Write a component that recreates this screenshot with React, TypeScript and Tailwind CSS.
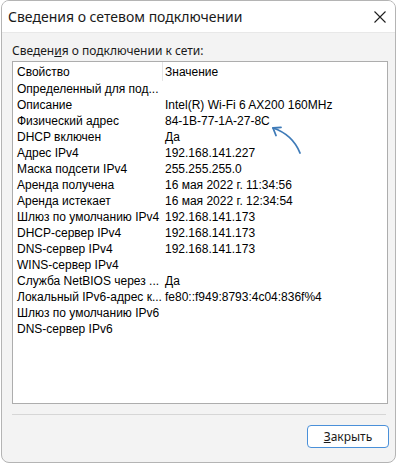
import React from 'react';

const rows: [string, string][] = [
  ['Определенный для под...', ''],
  ['Описание', 'Intel(R) Wi-Fi 6 AX200 160MHz'],
  ['Физический адрес', '84-1B-77-1A-27-8C'],
  ['DHCP включен', 'Да'],
  ['Адрес IPv4', '192.168.141.227'],
  ['Маска подсети IPv4', '255.255.255.0'],
  ['Аренда получена', '16 мая 2022 г. 11:34:56'],
  ['Аренда истекает', '16 мая 2022 г. 12:34:54'],
  ['Шлюз по умолчанию IPv4', '192.168.141.173'],
  ['DHCP-сервер IPv4', '192.168.141.173'],
  ['DNS-сервер IPv4', '192.168.141.173'],
  ['WINS-сервер IPv4', ''],
  ['Служба NetBIOS через ...', 'Да'],
  ['Локальный IPv6-адрес к...', 'fe80::f949:8793:4c04:836f%4'],
  ['Шлюз по умолчанию IPv6', ''],
  ['DNS-сервер IPv6', ''],
];

const ui = "font-['Noto_Sans',sans-serif]";
const list = "font-['Liberation_Sans',Arial,sans-serif]";

export default function App() {
  return (
    <div className="relative w-[400px] h-[465px] bg-white">
      <div className="ml-px w-[395px] h-[463px] rounded-lg border border-[#b4b4b4] bg-[#f3f3f3] overflow-hidden flex flex-col">
        {/* title bar */}
        <div className="h-8 shrink-0 bg-white border-b border-[#e8e8e8] flex items-center justify-between pl-[6px] pr-[8px]">
          <span className={`${ui} text-[14px] text-[#1a1a1a]`}>Сведения о сетевом подключении</span>
          <svg width="12" height="12" viewBox="0 0 12 12" className="mr-[1px]">
            <path d="M0.5 0.5 L11.5 11.5 M11.5 0.5 L0.5 11.5" stroke="#1f1f1f" strokeWidth="1.1" />
          </svg>
        </div>

        <div className="flex flex-col pl-[10px]">
          <div className={`${ui} mt-[10px] h-4 text-[12px] leading-4 text-[#1a1a1a]`}>
            Сведен<span className="underline">и</span>я о подключении к сети:
          </div>

          <div className={`${list} mt-[2px] w-[376px] h-[343px] border border-[#adadad] bg-white text-[12px] text-black`}>
            <div className="flex h-[19px] items-center">
              <div className="w-[150px] h-full pl-[4px] flex items-center border-r border-[#e5e5e5]">Свойство</div>
              <div className="pl-[2px]">Значение</div>
            </div>
            {rows.map(([k, v]) => (
              <div key={k} className="flex h-4 leading-4">
                <div className="w-[150px] pl-[4px] whitespace-nowrap">{k}</div>
                <div className="pl-[2px] whitespace-nowrap">{v}</div>
              </div>
            ))}
          </div>

          <div className="mt-[10px] w-[374px] h-px bg-[#d6d6d6]" />

          <div className="mt-[10px] w-[377px] flex justify-end">
            <button className={`${ui} w-[82px] h-[23px] rounded-[4px] border border-[#4a90d9] bg-white text-[12px] text-[#1a1a1a]`}>
              <span className="underline">З</span>акрыть
            </button>
          </div>
        </div>
      </div>

      {/* annotation arrow */}
      <svg className="absolute left-0 top-0 pointer-events-none" width="400" height="465">
        <path d="M300 153 C 296 143, 288 133, 273 128" fill="none" stroke="#3f7bb8" strokeWidth="1.8" strokeLinecap="round" />
        <path d="M281 127.3 L273 128 L276 135.5" fill="none" stroke="#3f7bb8" strokeWidth="1.8" strokeLinecap="round" strokeLinejoin="round" />
      </svg>
    </div>
  );
}
